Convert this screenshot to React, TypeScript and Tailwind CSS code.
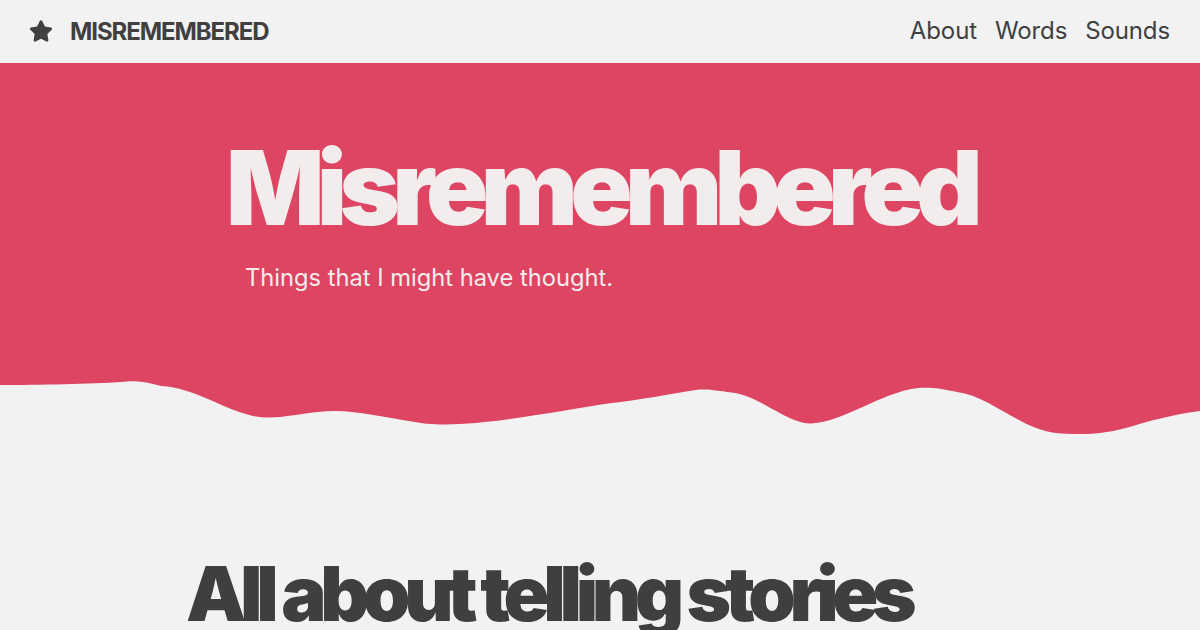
import { FaStar } from "react-icons/fa";

const links = ["About", "Words", "Sounds"];

const Wave = () => (
  <svg
    viewBox="0 0 1200 60"
    preserveAspectRatio="none"
    className="block w-full h-[60px]"
  >
    <path
      fill="#dd4563"
      d="M0 0 H1200 V31 C1170 35 1150 41 1133 46 C1105 55 1078 55 1056 53 C1020 49 990 16 957 12 C940 8 930 7 918 8 C880 12 835 48 804 43 C780 38 755 13 727 12 C712 10 705 9 696 10 C670 14 640 20 612 23 C560 30 470 50 421 43 C380 37 350 28 318 32 C290 35 275 40 253 36 C220 28 195 8 161 6 C140 0 130 1 122 2 C90 4 40 5 0 5 Z"
    />
  </svg>
);

export default function App() {
  return (
    <div className="min-h-screen bg-[#f2f2f2] font-['Inter',sans-serif] text-[#404040] overflow-hidden">
      {/*nav*/}
      <div className="h-[63px] flex items-center justify-between pl-[29px] pr-[30px]">
        <div className="flex items-center gap-[17px]">
          <FaStar className="w-[24px] h-[24px] text-[#404040] -mt-[2px]" />
          <span className="text-[24px] font-bold tracking-[-0.045em]">
            MISREMEMBERED
          </span>
        </div>
        <div className="flex items-center gap-[18px] text-[24px] -mt-[2px]">
          {links.map((l) => (
            <a key={l} href="#" className="tracking-[-0.005em]">
              {l}
            </a>
          ))}
        </div>
      </div>
      {/*hero*/}
      <div className="bg-[#dd4563] text-[#f3ecec] pt-[72px] pb-[87px] pl-[226px]">
        <h1 className="text-[103px] leading-[106px] font-black tracking-[-0.075em]">
          Misremembered
        </h1>
        <p className="text-[23.7px] mt-[22px] pl-[19px] leading-[30px]">
          Things that I might have thought.
        </p>
      </div>
      <Wave />
      {/*content*/}
      <div className="pl-[186px] pt-[113px]">
        <h2 className="text-[76px] leading-[80px] font-black tracking-[-0.083em] text-[#3f3f3f]">
          All about telling stories
        </h2>
      </div>
    </div>
  );
}
